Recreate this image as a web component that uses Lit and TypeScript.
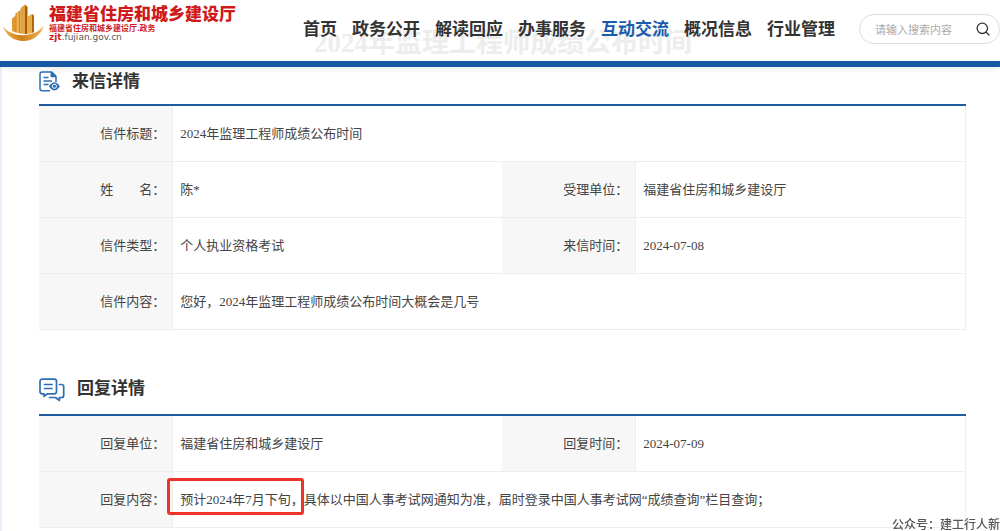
import { LitElement, html, css, svg } from "lit";
import { customElement } from "lit/decorators.js";

const NAV = ["首页", "政务公开", "解读回应", "办事服务", "互动交流", "概况信息", "行业管理"];
const ACTIVE = "互动交流";

const logo = svg`
  <svg class="emblem" viewBox="0 0 42 38" width="42" height="38" aria-hidden="true">
    <defs>
      <linearGradient id="gold" x1="0" x2="1" y1="0" y2="0">
        <stop offset="0" stop-color="#d98a1c" />
        <stop offset=".5" stop-color="#f3bd55" />
        <stop offset="1" stop-color="#b96a10" />
      </linearGradient>
      <linearGradient id="swoosh" x1="0" x2="1" y1="0" y2="0">
        <stop offset="0" stop-color="#f0b64c" />
        <stop offset=".45" stop-color="#cf7d16" />
        <stop offset="1" stop-color="#eeb85a" />
      </linearGradient>
    </defs>
    <path d="M9 14.500l4-3v17l-4-1.500z" fill="#dd9a35" />
    <path d="M12.500 9.500l5-3.500v23.500l-5-1z" fill="url(#gold)" />
    <path d="M17.500 4l4.500-3.500v29.500l-4.500-.5z" fill="#e3a23a" />
    <path d="M22 .5l2.500 2.500v27h-2.500z" fill="#a95d0c" />
    <path d="M24.500 12.500l4.500-2.500v19l-4.500 1z" fill="#e9ac48" />
    <path d="M29 10l2 1.500v16.500l-2 1z" fill="#b1650e" />
    <path d="M0 22.500c5 6 12 8.700 20 8.700S36 28 41 21.500C37.500 31.500 30 37 20.500 37S3.500 32 0 22.500z" fill="url(#swoosh)" />
  </svg>`;

const letterIcon = svg`
  <svg viewBox="0 0 21 21" width="21" height="21" fill="none" stroke="#2f6db5" stroke-width="1.500" aria-hidden="true">
    <path d="M11 19.700H3.200Q1 19.700 1 17.500V3Q1 .9 3.200 .9H12.500L17 5.300V11" stroke-linejoin="round" />
    <path d="M12.300 1v4.500H17" fill="#2f6db5" stroke-linejoin="round" />
    <path d="M4.500 6.500h5M4.500 10h8.500M4.500 13.500h5" />
    <path d="M10.800 15.300Q15.400 8.500 20 15.300Q15.400 22 10.800 15.300z" fill="#2f6db5" />
    <circle cx="15.400" cy="15.200" r="2.100" fill="#2f6db5" stroke="#fff" stroke-width="1" />
  </svg>`;

const replyIcon = svg`
  <svg viewBox="0 0 26 24" width="26" height="24" fill="none" stroke="#2f6db5" stroke-width="1.700" stroke-linejoin="round" stroke-linecap="round" aria-hidden="true">
    <path d="M3.200 1.200H15.200Q17.500 1.200 17.500 3.500V13.500Q17.500 15.800 15.200 15.800H8.500L5 18.300V15.800H3.200Q1 15.800 1 13.500V3.500Q1 1.200 3.200 1.200z" />
    <path d="M5.500 6.500h7.500M5.500 10.500h7.500" />
    <path d="M20.500 6.500H22.500Q24.700 6.500 24.700 8.700V17.500Q24.700 19.500 22.500 19.500H20.500V22.500L16.500 19.500H10.500" />
  </svg>`;

@customElement("app-root")
export class AppRoot extends LitElement {
  static styles = css`
    :host {
      display: block;
      min-height: 100vh;
      overflow-x: hidden;
      background: linear-gradient(to right, #e9f0fb 2px, #fff 2px);
      color: #444;
      font: 13px/20px "Liberation Serif", "Noto Sans CJK SC", serif;
    }
    * {
      box-sizing: border-box;
    }
    svg {
      display: block;
      flex: none;
    }
    .header {
      position: relative;
      display: flex;
      align-items: flex-start;
      height: 67px;
      border-bottom: 6px solid #1658a2;
      background: #fff;
      box-shadow: 0 2px 6px rgba(0, 0, 0, 0.08);
      font-family: "Noto Sans CJK SC", sans-serif;
    }
    .ghost {
      position: absolute;
      inset: auto 0 0 6px;
      text-align: center;
      font: bold 27px/36px "Liberation Serif", "Noto Sans CJK SC", serif;
      color: #ededed;
    }
    .brand {
      display: flex;
      gap: 4px;
      padding: 4px 0 0 3px;
      color: #cf1a1c;
      text-decoration: none;
      z-index: 1;
    }
    .names {
      display: flex;
      flex-direction: column;
    }
    .org {
      font-size: 17px;
      line-height: 18px;
      font-weight: 900;
    }
    .dept {
      font-size: 8px;
      line-height: 11px;
      font-weight: 700;
    }
    .url {
      font: 9px/8px "DejaVu Sans", sans-serif;
      color: #555;
    }
    .url b {
      color: #cf1a1c;
    }
    .nav {
      display: flex;
      gap: 15px;
      margin: 0 24px 0 auto;
      padding-top: 16px;
      z-index: 1;
    }
    .nav a {
      font-size: 17px;
      line-height: 24px;
      font-weight: 700;
      color: #333;
      text-decoration: none;
      white-space: nowrap;
    }
    .nav a.active {
      color: #1a5cab;
    }
    .search {
      display: flex;
      align-items: center;
      width: 141px;
      height: 30px;
      margin-top: 14px;
      padding: 0 8px 0 15px;
      border: 1px solid #ddd;
      border-radius: 15px;
      z-index: 1;
    }
    .search input {
      flex: 1;
      min-width: 0;
      padding: 0;
      border: 0;
      outline: 0;
      background: none;
      font: 11px/16px "Noto Sans CJK SC", sans-serif;
      color: #333;
    }
    .search input::placeholder {
      color: #aaa;
      opacity: 1;
    }
    .search button {
      padding: 1px;
      border: 0;
      background: none;
      color: #333;
    }
    .main {
      display: flex;
      flex-direction: column;
      gap: 48px;
      padding: 4px 34px 0 39px;
    }
    .title {
      display: flex;
      align-items: flex-start;
      gap: 12px;
      margin: 0;
      padding-bottom: 12px;
      border-bottom: 2px solid #1f5c9f;
      font: bold 17px/18px "Noto Sans CJK SC", sans-serif;
      color: #333;
    }
    .grid {
      width: 100%;
      table-layout: fixed;
      border-collapse: separate;
      border-spacing: 0;
      border-right: 1px solid #eee;
    }
    .label-col {
      width: 14.5%;
    }
    .value-col {
      width: 35.5%;
    }
    th,
    td {
      height: 56px;
      padding: 0 7px;
      border-bottom: 1px solid #eee;
      font-weight: 400;
      text-align: left;
    }
    th {
      border-right: 1px solid #eee;
      background: #f7f7f7;
      text-align: right;
    }
    .marked {
      position: relative;
    }
    .marked::after {
      content: "";
      position: absolute;
      inset: -14px 0 -8px -13px;
      border: 3px solid #ee3428;
      border-radius: 3px;
    }
    .credit {
      position: fixed;
      right: 0;
      bottom: 0;
      font: 500 12px/14px "Noto Sans CJK SC", sans-serif;
      color: #555;
      text-shadow: 0 0 2px #fff;
    }
  `;

  private cols() {
    return html`<colgroup>
      <col class="label-col" /><col class="value-col" /><col class="label-col" /><col class="value-col" />
    </colgroup>`;
  }

  render() {
    return html`
      <header class="header">
        <div class="ghost" aria-hidden="true">2024年监理工程师成绩公布时间</div>
        <a class="brand" href="#">
          ${logo}
          <span class="names">
            <span class="org">福建省住房和城乡建设厅</span>
            <span class="dept">福建省住房和城乡建设厅.政务</span>
            <span class="url"><b>zjt</b>.fujian.gov.cn</span>
          </span>
        </a>
        <nav class="nav">
          ${NAV.map((n) => html`<a href="#" class=${n === ACTIVE ? "active" : ""}>${n}</a>`)}
        </nav>
        <form class="search" role="search">
          <input type="text" placeholder="请输入搜索内容" aria-label="请输入搜索内容" />
          <button type="button" aria-label="搜索">
            <svg viewBox="0 0 14 14" width="14" height="14" fill="none" stroke="currentColor" stroke-width="1.300" stroke-linecap="round">
              <circle cx="6.300" cy="6.300" r="5.200" />
              <path d="M10.200 10.200L13 13" />
            </svg>
          </button>
        </form>
      </header>
      <main class="main">
        <section>
          <h2 class="title" id="letter">${letterIcon}来信详情</h2>
          <table class="grid" aria-labelledby="letter">
            ${this.cols()}
            <tbody>
              <tr><th scope="row">信件标题：</th><td colspan="3">2024年监理工程师成绩公布时间</td></tr>
              <tr><th scope="row">姓　　名：</th><td>陈*</td><th scope="row">受理单位：</th><td>福建省住房和城乡建设厅</td></tr>
              <tr><th scope="row">信件类型：</th><td>个人执业资格考试</td><th scope="row">来信时间：</th><td>2024-07-08</td></tr>
              <tr><th scope="row">信件内容：</th><td colspan="3">您好，2024年监理工程师成绩公布时间大概会是几号</td></tr>
            </tbody>
          </table>
        </section>
        <section>
          <h2 class="title" id="reply">${replyIcon}回复详情</h2>
          <table class="grid" aria-labelledby="reply">
            ${this.cols()}
            <tbody>
              <tr><th scope="row">回复单位：</th><td>福建省住房和城乡建设厅</td><th scope="row">回复时间：</th><td>2024-07-09</td></tr>
              <tr><th scope="row">回复内容：</th><td colspan="3"><span class="marked">预计2024年7月下旬，</span>具体以中国人事考试网通知为准，届时登录中国人事考试网“成绩查询”栏目查询；</td></tr>
            </tbody>
          </table>
        </section>
      </main>
      <div class="credit">公众号：建工行人新</div>
    `;
  }
}
